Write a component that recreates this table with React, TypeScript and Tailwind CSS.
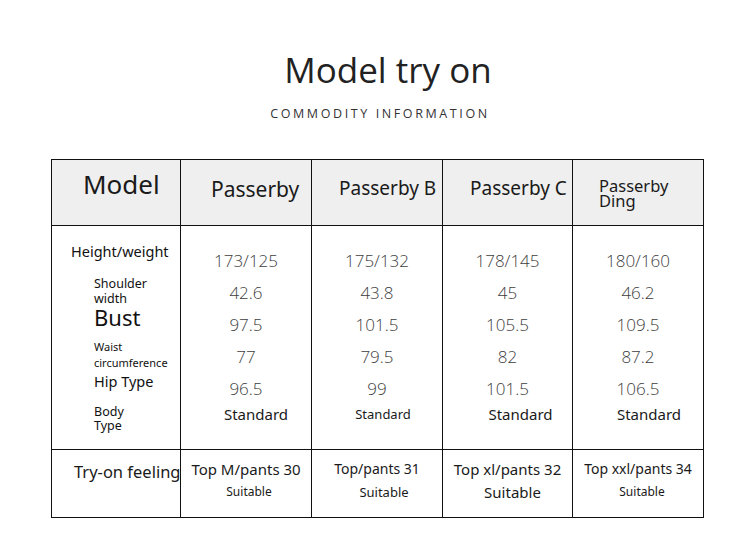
import React from "react";

const sans = { fontFamily: '"Noto Sans", "Open Sans", sans-serif' };
const thin = { fontFamily: '"Open Sans", "Noto Sans", sans-serif' };

type Col = {
  name: React.ReactNode;
  namePad: string;
  values: string[];
  standardPad: string;
  standardSize: string;
  top: string;
  topSize: string;
  suitSize: string;
  suitPad: string;
};

const cols: Col[] = [
  {
    name: <span className="text-[21px] leading-[24px]">Passerby</span>,
    namePad: "pl-[30px] pt-[17px]",
    values: ["173/125", "42.6", "97.5", "77", "96.5"],
    standardPad: "pl-[20px]",
    standardSize: "text-[15px]",
    top: "Top M/pants 30",
    topSize: "text-[15px]",
    suitSize: "text-[12px]",
    suitPad: "pl-[6px]",
  },
  {
    name: <span className="text-[19px] leading-[24px]">Passerby B</span>,
    namePad: "pl-[27px] pt-[16px]",
    values: ["175/132", "43.8", "101.5", "79.5", "99"],
    standardPad: "pl-[12px]",
    standardSize: "text-[13px]",
    top: "Top/pants 31",
    topSize: "text-[14px]",
    suitSize: "text-[13px]",
    suitPad: "pl-[14px]",
  },
  {
    name: <span className="text-[19px] leading-[24px]">Passerby C</span>,
    namePad: "pl-[27px] pt-[16px]",
    values: ["178/145", "45", "105.5", "82", "101.5"],
    standardPad: "pl-[26px]",
    standardSize: "text-[15px]",
    top: "Top xl/pants 32",
    topSize: "text-[15px]",
    suitSize: "text-[15px]",
    suitPad: "pl-[10px]",
  },
  {
    name: (
      <span className="text-[16.5px] leading-[15px] block">
        Passerby
        <br />
        Ding
      </span>
    ),
    namePad: "pl-[26px] pt-[18px]",
    values: ["180/160", "46.2", "109.5", "87.2", "106.5"],
    standardPad: "pl-[22px]",
    standardSize: "text-[15px]",
    top: "Top xxl/pants 34",
    topSize: "text-[14px]",
    suitSize: "text-[12px]",
    suitPad: "pl-[8px]",
  },
];

export default function App() {
  return (
    <div className="w-[750px] h-[553px] bg-white text-[#1a1a1a] overflow-hidden" style={sans}>
      <div className="flex flex-col items-center pt-[48px]">
        <h1 className="text-[35px] leading-[44px] text-[#222] pl-[26px]" style={thin}>
          Model try on
        </h1>
        <p className="mt-[14px] text-[12.5px] leading-[16px] tracking-[2.6px] text-[#333] pl-[10px]" style={thin}>
          COMMODITY INFORMATION
        </p>
      </div>

      <div className="ml-[51px] mt-[37px] w-[653px] border border-[#111] grid grid-cols-[128px_131px_131px_130px_131px] grid-rows-[66px_224px_67px]">
        {/* header row */}
        <div className="bg-[#efefef] border-b border-[#111] pl-[31px] pt-[9px] text-[26px] leading-[30px]">
          Model
        </div>
        {cols.map((c, i) => (
          <div key={"h" + i} className={"bg-[#efefef] border-b border-l border-[#111] " + c.namePad}>
            {c.name}
          </div>
        ))}

        {/* body row */}
        <div className="border-b border-[#111] flex flex-col text-[#111]">
          <div className="pl-[19px] mt-[15px] text-[14.5px] leading-[20px]">Height/weight</div>
          <div className="pl-[42px] mt-[15px] text-[12.5px] leading-[15px]">
            Shoulder
            <br />
            width
          </div>
          <div className="pl-[42px] mt-[0px] text-[22px] leading-[22px]">Bust</div>
          <div className="pl-[42px] mt-[11px] text-[11px] leading-[16px]">
            Waist
            <br />
            circumference
          </div>
          <div className="pl-[42px] mt-[1px] text-[14.5px] leading-[18px]">Hip Type</div>
          <div className="pl-[42px] mt-[15px] text-[12.5px] leading-[14px]">
            Body
            <br />
            Type
          </div>
        </div>
        {cols.map((c, i) => (
          <div key={"b" + i} className="border-b border-l border-[#111] flex flex-col pt-[19px]">
            {c.values.map((v) => (
              <div
                key={v}
                className="h-[32px] leading-[32px] text-center text-[17px] font-light text-[#3d3d3d]"
                style={thin}
              >
                {v}
              </div>
            ))}
            <div className={"h-[18px] leading-[18px] text-center text-[#1a1a1a] " + c.standardPad + " " + c.standardSize}>
              Standard
            </div>
          </div>
        ))}

        {/* footer row */}
        <div className="pl-[22px] pt-[11px] text-[16.5px] leading-[22px] whitespace-nowrap relative z-10">
          Try-on feeling
        </div>
        {cols.map((c, i) => (
          <div key={"f" + i} className="border-l border-[#111] flex flex-col items-center pt-[9px]">
            <div className={"leading-[20px] whitespace-nowrap " + c.topSize}>{c.top}</div>
            <div className={"leading-[22px] mt-[2px] " + c.suitSize + " " + c.suitPad}>Suitable</div>
          </div>
        ))}
      </div>
    </div>
  );
}
